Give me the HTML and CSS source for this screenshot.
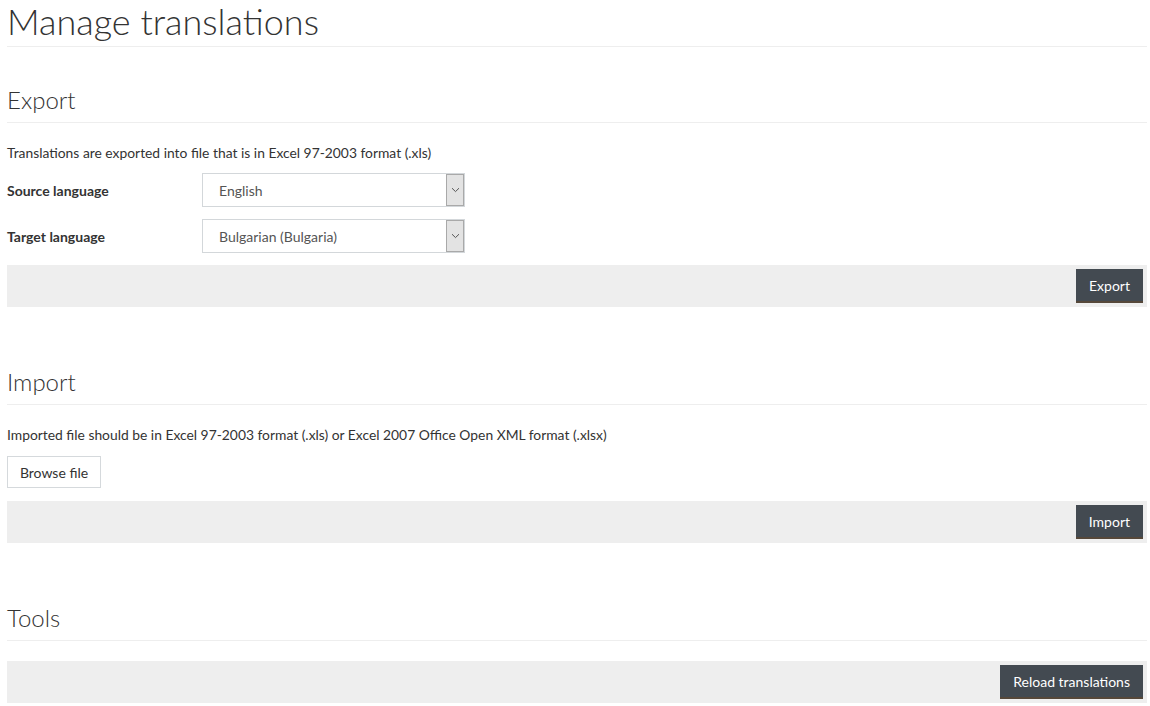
FILE: index.html
```html
<!DOCTYPE html>
<html>
<head>
<meta charset="utf-8">
<title>Manage translations</title>
<link rel="stylesheet" href="styles.css">
</head>
<body>
<div class="page">
  <h1 class="page-title">Manage translations</h1>

  <section class="section section-export">
    <h2 class="section-title">Export</h2>
    <p class="note">Translations are exported into file that is in Excel 97-2003 format (.xls)</p>
    <div class="form-row">
      <label class="form-label">Source language</label>
      <div class="select">
        <span class="select-value">English</span>
        <span class="select-arrow"><svg width="9" height="6" viewBox="0 0 9 6"><path d="M1 1.2 L4.5 4.6 L8 1.2" fill="none" stroke="#555" stroke-width="1"/></svg></span>
      </div>
    </div>
    <div class="form-row">
      <label class="form-label">Target language</label>
      <div class="select">
        <span class="select-value">Bulgarian (Bulgaria)</span>
        <span class="select-arrow"><svg width="9" height="6" viewBox="0 0 9 6"><path d="M1 1.2 L4.5 4.6 L8 1.2" fill="none" stroke="#555" stroke-width="1"/></svg></span>
      </div>
    </div>
    <div class="action-bar">
      <button class="btn-dark">Export</button>
    </div>
  </section>

  <section class="section section-import">
    <h2 class="section-title">Import</h2>
    <p class="note">Imported file should be in Excel 97-2003 format (.xls) or Excel 2007 Office Open XML format (.xlsx)</p>
    <button class="btn-light">Browse file</button>
    <div class="action-bar">
      <button class="btn-dark">Import</button>
    </div>
  </section>

  <section class="section section-tools">
    <h2 class="section-title">Tools</h2>
    <div class="action-bar tools-bar">
      <button class="btn-dark">Reload translations</button>
    </div>
  </section>
</div>
</body>
</html>
```

FILE: styles.css
```css
* { box-sizing: border-box; }
html, body { margin: 0; padding: 0; background: #fff; }
body {
  font-family: Lato, "Open Sans", "Liberation Sans", sans-serif;
  font-size: 14px;
  color: #333;
}
.page {
  width: 1140px;
  margin-left: 7px;
}
.page-title {
  margin: 0;
  font-size: 36px;
  font-weight: 300;
  line-height: 43px;
  padding-bottom: 3px;
  border-bottom: 1px solid #eee;
  color: #333;
}
.section { display: flex; flex-direction: column; }
.section-title {
  margin: 38px 0 0 0;
  font-size: 24px;
  font-weight: 300;
  line-height: 30px;
  padding-bottom: 7px;
  border-bottom: 1px solid #eee;
  color: #333;
}
.section-import .section-title { margin-top: 60px; }
.section-tools .section-title { margin-top: 60px; }
.note {
  margin: 20px 0 10px 0;
  line-height: 20px;
  font-size: 13.85px;
}
.section-import .note { margin-top: 20px; margin-bottom: 11px; }
.form-row {
  display: flex;
  align-items: center;
  margin-bottom: 12px;
}
.form-label {
  width: 195px;
  font-weight: 700;
}
.select {
  width: 263px;
  height: 34px;
  border: 1px solid #d3d7da;
  display: flex;
  align-items: center;
  justify-content: space-between;
  padding-left: 16px;
  background: #fff;
  color: #555;
}
.select-arrow {
  width: 18px;
  height: 32px;
  background: #e3e3e3;
  border: 1px solid #a9a9a9;
  display: flex;
  align-items: center;
  justify-content: center;
}
.action-bar {
  background: #eee;
  height: 42px;
  padding: 4px;
  display: flex;
  justify-content: flex-end;
}
.btn-dark {
  font-family: inherit;
  font-size: 14px;
  color: #fff;
  background: #434a51;
  border: none;
  border-bottom: 2px solid #56483a;
  height: 34px;
  padding: 0 13px;
  cursor: pointer;
}
.btn-light {
  align-self: flex-start;
  font-family: inherit;
  font-size: 14px;
  color: #333;
  background: #fff;
  border: 1px solid #d5d9dc;
  height: 32px;
  width: 94px;
  padding: 0;
  margin-bottom: 13px;
}
.tools-bar { margin-top: 20px; }
```
